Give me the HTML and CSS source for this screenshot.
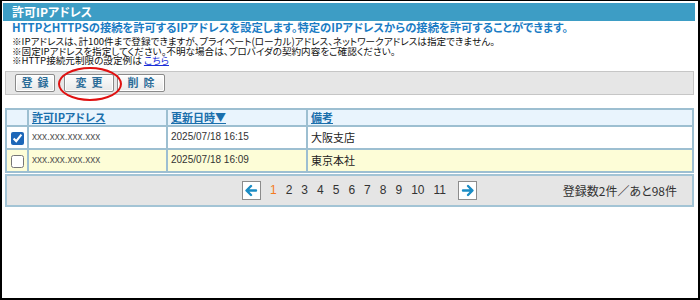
FILE: index.html
```html
<!DOCTYPE html>
<html lang="ja">
<head>
<meta charset="utf-8">
<title>許可IPアドレス</title>
<link rel="stylesheet" href="styles.css">
</head>
<body>
<div class="frame">
  <div class="titlebar">許可IPアドレス</div>
  <div class="content">
    <p class="lead">HTTPとHTTPSの接続を許可するIPアドレスを設定します。特定のIPアドレスからの接続を許可することができます。</p>
    <div class="notes">
      <p>※IPアドレスは、計100件まで登録できますが、プライベート(ローカル)アドレス、ネットワークアドレスは指定できません。</p>
      <p>※固定IPアドレスを指定してください。不明な場合は、プロバイダの契約内容をご確認ください。</p>
      <p>※HTTP接続元制限の設定例は <a href="#" class="link">こちら</a></p>
    </div>
    <div class="toolbar">
      <button class="btn btn-reg">登録</button>
      <span class="btn-wrap">
        <button class="btn btn-mod">変更</button>
        <span class="ring"></span>
      </span>
      <button class="btn btn-del">削除</button>
    </div>
    <table class="grid">
      <thead>
        <tr>
          <th class="col-chk"></th>
          <th class="col-ip"><a href="#">許可IPアドレス</a></th>
          <th class="col-date"><a href="#">更新日時▼</a></th>
          <th class="col-note"><a href="#">備考</a></th>
        </tr>
      </thead>
      <tbody>
        <tr>
          <td class="col-chk"><input type="checkbox" checked></td>
          <td class="ip">xxx.xxx.xxx.xxx</td>
          <td class="date">2025/07/18 16:15</td>
          <td class="note">大阪支店</td>
        </tr>
        <tr class="alt">
          <td class="col-chk"><input type="checkbox"></td>
          <td class="ip">xxx.xxx.xxx.xxx</td>
          <td class="date">2025/07/18 16:09</td>
          <td class="note">東京本社</td>
        </tr>
      </tbody>
    </table>
    <div class="pager">
      <div class="pages">
        <span class="arrow"><svg width="17" height="17" viewBox="0 0 17 17"><path d="M4 8.5H13M8 4L3.5 8.5L8 13" fill="none" stroke="#1a8cc4" stroke-width="2.4" stroke-linecap="round" stroke-linejoin="round"/></svg></span>
        <span class="num current">1</span>
        <span class="num">2</span>
        <span class="num">3</span>
        <span class="num">4</span>
        <span class="num">5</span>
        <span class="num">6</span>
        <span class="num">7</span>
        <span class="num">8</span>
        <span class="num">9</span>
        <span class="num">10</span>
        <span class="num">11</span>
        <span class="arrow next"><svg width="17" height="17" viewBox="0 0 17 17"><path d="M4 8.5H13M9 4L13.5 8.5L9 13" fill="none" stroke="#1a8cc4" stroke-width="2.4" stroke-linecap="round" stroke-linejoin="round"/></svg></span>
      </div>
      <div class="count">登録数2件／あと98件</div>
    </div>
  </div>
</div>
</body>
</html>
```
FILE: styles.css
```css
html, body {
  margin: 0;
  padding: 0;
  background: #fff;
}
body {
  font-family: "Noto Sans CJK JP", "Liberation Sans", sans-serif;
  font-feature-settings: "palt";
  color: #222;
}
.frame {
  box-sizing: border-box;
  width: 700px;
  height: 300px;
  border: 2px solid #000;
  border-top-width: 1px;
  padding: 2px 3px 0 1px;
}
.titlebar {
  height: 18px;
  line-height: 18px;
  background: #3d9dc5;
  color: #fff;
  font-size: 12px;
  font-weight: bold;
  padding-left: 9px;
}
.content {
  padding: 0 1px 0 2px;
}
.lead {
  margin: 0 0 0 7px;
  font-size: 11.3px;
  line-height: 13px;
  font-weight: bold;
  color: #1a7cc4;
}
.notes {
  margin: 3px 0 0 7px;
}
.notes p {
  margin: 0;
  font-size: 9.6px;
  line-height: 9.6px;
  height: 9.6px;
  color: #111;
}
.link {
  color: #1a2fd8;
  text-decoration: underline;
}
.toolbar {
  margin-top: 5px;
  height: 22px;
  background: #e6e6e6;
  border: 1px solid #c6c6c6;
  display: flex;
  align-items: center;
  padding-left: 9px;
}
.btn {
  box-sizing: border-box;
  height: 18px;
  padding: 0;
  border: 1px solid #8a8a8a;
  border-radius: 2px;
  background: linear-gradient(#fdfdfd, #e8e8e8);
  box-shadow: inset 0 0 0 1px #fff;
  font-family: "Noto Sans CJK JP", sans-serif;
  font-feature-settings: "palt";
  font-size: 11px;
  font-weight: bold;
  letter-spacing: 5px;
  text-indent: 5px;
  color: #2b6c98;
  line-height: 15px;
}
.btn-reg { width: 40px; margin-right: 9px; }
.btn-mod { width: 50px; }
.btn-del { width: 48px; margin-left: 3px; }
.btn-wrap {
  position: relative;
  display: inline-flex;
}
.ring {
  position: absolute;
  left: -6px;
  top: -7px;
  width: 60px;
  height: 30px;
  border: 2px solid #e01010;
  border-radius: 50%;
  pointer-events: none;
}
.grid {
  margin-top: 13px;
  width: 689px;
  border-collapse: collapse;
  border: 2px solid #9dbfd1;
}
.grid th, .grid td {
  border: 2px solid #9dbfd1;
  padding: 0 0 0 3px;
  text-align: left;
  box-sizing: border-box;
}
.grid th {
  height: 17px;
  background: #e9f4fd;
  font-size: 11px;
  line-height: 13px;
}
.grid th a {
  color: #1a6fac;
  font-weight: bold;
  text-decoration: underline;
}
.grid td {
  height: 23px;
  line-height: 14px;
  background: #fff;
}
.grid tr.alt td {
  background: #fdfdd7;
}
.grid .col-chk {
  width: 22px;
  padding: 0;
  text-align: center;
}
.grid .col-ip { width: 139px; }
.grid .col-date { width: 140px; }
.grid input[type="checkbox"] {
  margin: 0;
  width: 13px;
  height: 13px;
  accent-color: #1d67b8;
  vertical-align: middle;
}
.ip {
  font-family: "Liberation Sans", sans-serif;
  font-size: 10px;
  color: #555;
}
.date {
  font-family: "Liberation Sans", sans-serif;
  font-size: 10px;
  color: #333;
}
.note {
  font-size: 11px;
  color: #222;
}
.pager {
  margin-top: 1px;
  box-sizing: border-box;
  width: 689px;
  height: 33px;
  background: #e5e5e5;
  border: 2px solid #a3c4d5;
  display: grid;
  grid-template-columns: 1fr auto 1fr;
  align-items: center;
  padding-left: 20px;
}
.pages {
  grid-column: 2;
  display: flex;
  align-items: center;
  gap: 9px;
}
.arrow {
  box-sizing: border-box;
  width: 19px;
  height: 19px;
  background: #fff;
  border: 1px solid #8c8c8c;
  display: flex;
  align-items: center;
  justify-content: center;
}
.arrow.next { margin-left: 3px; }
.num {
  font-family: "Liberation Sans", sans-serif;
  font-size: 12px;
  color: #333;
}
.num.current {
  color: #f47b20;
}
.count {
  grid-column: 3;
  justify-self: end;
  padding-right: 15px;
  font-size: 12px;
  color: #333;
}
```
